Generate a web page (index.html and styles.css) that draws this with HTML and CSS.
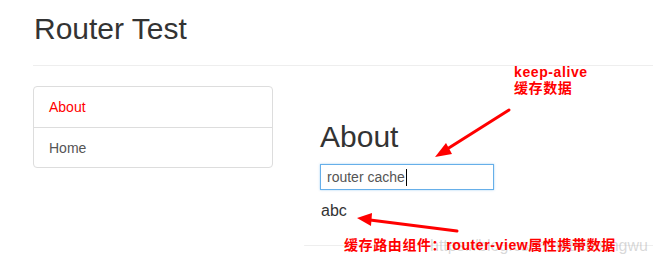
FILE: index.html
```html
<!DOCTYPE html>
<html lang="en">
<head>
    <meta charset="UTF-8">
    <meta name="viewport" content="width=device-width, initial-scale=1.0">
    <title>Router Test</title>
    <link rel="stylesheet" href="styles.css">
</head>
<body>
    <div class="container">
        <!-- Header -->
        <div class="page-header">
            <h1>Router Test</h1>
        </div>

        <div class="row">
            <!-- Nav links -->
            <div class="list-group">
                <a href="#" class="list-group-item active">About</a>
                <a href="#" class="list-group-item">Home</a>
            </div>

            <!-- Router view -->
            <div class="view">
                <h2>About</h2>
                <div class="input-wrap">
                    <input type="text" class="form-control" value="router cache"><span class="caret"></span>
                </div>
                <p class="msg">abc</p>
                <hr>
            </div>
        </div>
    </div>

    <!-- Screenshot annotations -->
    <div class="watermark">https://blog.csdn.net/zhixingwu</div>
    <div class="note note-top">keep-alive<br>缓存数据</div>
    <div class="note note-bottom">缓存路由组件：router-view属性携带数据</div>
    <svg class="arrows" width="653" height="267" viewBox="0 0 653 267">
        <line x1="509" y1="110" x2="444" y2="151" stroke="#f00" stroke-width="3" stroke-linecap="round"/>
        <polygon points="435,157 452,154 446,143" fill="#f00"/>
        <line x1="457" y1="231" x2="370" y2="220" stroke="#f00" stroke-width="3" stroke-linecap="round"/>
        <polygon points="357,218 372,213 371,226" fill="#f00"/>
    </svg>
</body>
</html>
```

FILE: styles.css
```css
body {
    font-family: "Liberation Sans", Arial, sans-serif;
    font-size: 14px;
    line-height: 20px;
    color: #333;
    margin: 0;
    padding: 0;
    background-color: #fff;
    overflow: hidden;
}

.container {
    padding-left: 33px;
}

.page-header {
    padding-top: 12px;
    padding-bottom: 20px;
    border-bottom: 1px solid #eee;
}

.page-header h1 {
    margin: 0;
    padding-left: 1px;
    font-size: 30px;
    font-weight: normal;
    line-height: 33px;
}

.row {
    display: flex;
    gap: 31px;
    margin-top: 20px;
}

.list-group {
    width: 240px;
    height: 82px;
    box-sizing: border-box;
    border: 1px solid #ddd;
    border-radius: 4px;
    display: flex;
    flex-direction: column;
}

.list-group-item {
    display: block;
    padding: 10px 15px;
    color: #555;
    text-decoration: none;
}

.list-group-item + .list-group-item {
    border-top: 1px solid #ddd;
}

.list-group-item.active {
    color: #f00;
}

.view {
    flex: 1;
}

.view h2 {
    margin: 34px 0 0 16px;
    font-size: 30px;
    font-weight: normal;
    line-height: 33px;
}

.input-wrap {
    position: relative;
    margin: 11px 0 0 16px;
    width: 174px;
}

.form-control {
    display: block;
    width: 174px;
    height: 26px;
    box-sizing: border-box;
    padding: 0 6px;
    border: 1px solid #66afe9;
    border-radius: 0;
    font-family: "Liberation Sans", Arial, sans-serif;
    font-size: 14px;
    color: #555;
    outline: none;
    box-shadow: 0 0 2px rgba(102, 175, 233, 0.6);
}

.caret {
    position: absolute;
    left: 86px;
    top: 5px;
    width: 1px;
    height: 17px;
    background-color: #000;
}

.msg {
    margin: 11px 0 0 17px;
    font-size: 16px;
    line-height: 20px;
}

hr {
    margin: 24px 0 0 0;
    border: 0;
    border-top: 1px solid #eee;
    border-radius: 1px 0 0 1px;
}

.watermark {
    position: absolute;
    left: 430px;
    top: 237px;
    font-size: 16px;
    line-height: 18px;
    color: rgba(170, 170, 170, 0.45);
}

.note {
    position: absolute;
    font-family: "Liberation Sans", "Noto Sans CJK SC", sans-serif;
    font-weight: bold;
    font-size: 14px;
    line-height: 16px;
    color: #f00;
}

.note-top {
    left: 514px;
    top: 64px;
    letter-spacing: 0.6px;
}

.note-bottom {
    left: 344px;
    top: 237px;
    letter-spacing: 0.6px;
}

.arrows {
    position: absolute;
    left: 0;
    top: 0;
}
```
